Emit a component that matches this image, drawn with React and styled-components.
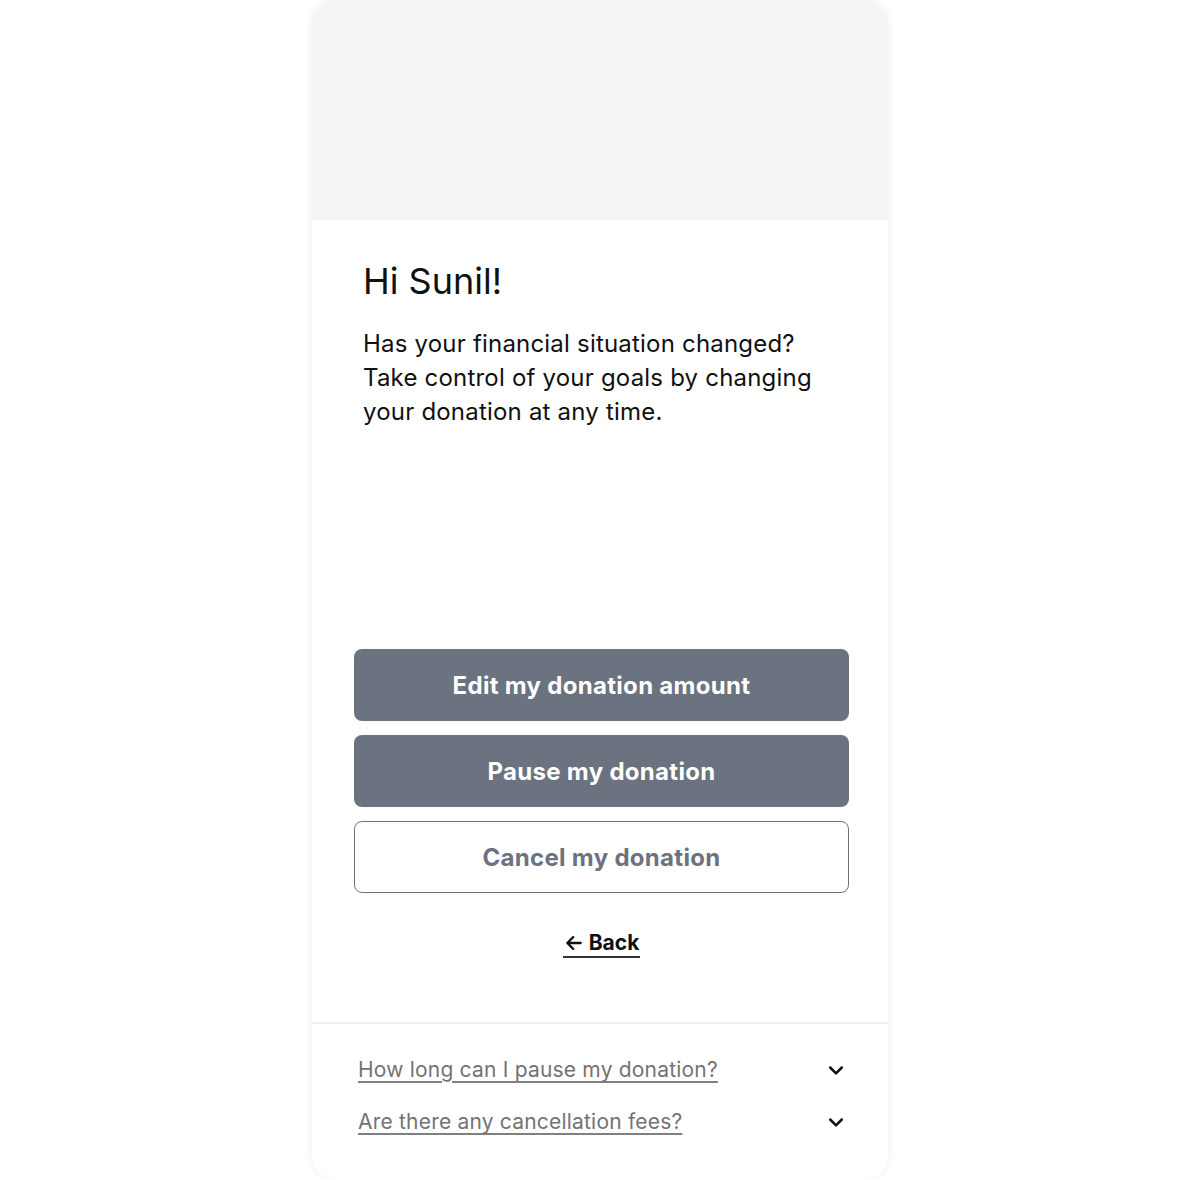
import React from 'react';
import styled, { createGlobalStyle } from 'styled-components';

const GlobalStyle = createGlobalStyle`
  body {
    margin: 0;
    background: #ffffff;
    font-family: Inter, "Noto Sans", sans-serif;
    color: #111111;
  }
`;

const Card = styled.div`
  width: 576px;
  margin: 0 auto;
  background: #ffffff;
  border-radius: 24px;
  box-shadow: 0 0 10px rgba(0, 0, 0, 0.07);
  overflow: hidden;
`;

const Hero = styled.div`
  height: 220px;
  background: #f4f4f4;
`;

const Body = styled.div`
  padding: 39px 39px 0 42px;
  display: flex;
  flex-direction: column;
`;

const Intro = styled.div`
  padding-left: 9px;
`;

const Heading = styled.h1`
  margin: 0;
  font-size: 36px;
  line-height: 44px;
  font-weight: 400;
  color: #111111;
`;

const Text = styled.p`
  margin: 24px 0 0;
  font-size: 24px;
  line-height: 34px;
  letter-spacing: 0.2px;
  color: #111111;
`;

const Actions = styled.div`
  margin-top: 220px;
  display: flex;
  flex-direction: column;
  gap: 14px;
`;

const Button = styled.button`
  height: 72px;
  width: 100%;
  border-radius: 8px;
  font-family: Inter, "Noto Sans", sans-serif;
  font-size: 24px;
  font-weight: 700;
  letter-spacing: 0.3px;
  cursor: pointer;
  background: ${p => (p.$outline ? '#ffffff' : '#6b7280')};
  color: ${p => (p.$outline ? '#6b7280' : '#ffffff')};
  border: ${p => (p.$outline ? '1.5px solid #6b7280' : 'none')};
`;

const BackRow = styled.div`
  display: flex;
  justify-content: center;
  margin: 37px 0 64px;
`;

const BackLink = styled.a`
  display: flex;
  align-items: center;
  gap: 5px;
  font-size: 21px;
  font-weight: 700;
  line-height: 25px;
  color: #111111;
  padding: 0 1px 1px;
  border-bottom: 2px solid #333333;
  cursor: pointer;
`;

const Divider = styled.hr`
  margin: 0;
  border: none;
  border-top: 2px solid #eeeeee;
`;

const Faq = styled.div`
  padding: 34px 42px 45px 46px;
  display: flex;
  flex-direction: column;
  gap: 28px;
`;

const FaqRow = styled.div`
  display: flex;
  align-items: center;
  justify-content: space-between;
`;

const FaqLink = styled.a`
  font-size: 21px;
  line-height: 24px;
  letter-spacing: 0.2px;
  color: #737373;
  text-decoration: underline;
  text-decoration-color: #808080;
  text-underline-offset: 4px;
  cursor: pointer;
`;

const Chevron = () => (
  <svg width="20" height="20" viewBox="0 0 24 24" fill="none" stroke="#111" strokeWidth="3" strokeLinecap="round" strokeLinejoin="round">
    <path d="M5 9l7 7 7-7" />
  </svg>
);

const ArrowLeft = () => (
  <svg width="20" height="20" viewBox="0 0 24 24" fill="none" stroke="#111" strokeWidth="2.8" strokeLinecap="round" strokeLinejoin="round">
    <path d="M20 12H4M11 5l-7 7 7 7" />
  </svg>
);

const faqs = ['How long can I pause my donation?', 'Are there any cancellation fees?'];

export default function App() {
  return (
    <>
      <GlobalStyle />
      <Card>
        <Hero />
        <Body>
          <Intro>
            <Heading>Hi Sunil!</Heading>
            <Text>
              Has your financial situation changed?
              <br />
              Take control of your goals by changing
              <br />
              your donation at any time.
            </Text>
          </Intro>
          <Actions>
            <Button>Edit my donation amount</Button>
            <Button>Pause my donation</Button>
            <Button $outline>Cancel my donation</Button>
          </Actions>
          <BackRow>
            <BackLink>
              <ArrowLeft />
              Back
            </BackLink>
          </BackRow>
        </Body>
        <Divider />
        <Faq>
          {faqs.map(q => (
            <FaqRow key={q}>
              <FaqLink>{q}</FaqLink>
              <Chevron />
            </FaqRow>
          ))}
        </Faq>
      </Card>
    </>
  );
}
